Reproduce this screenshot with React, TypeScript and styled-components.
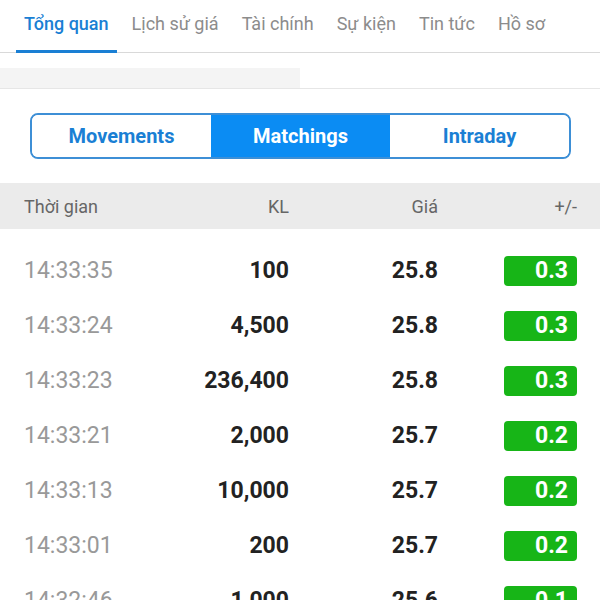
import React from 'react';
import styled, {createGlobalStyle} from 'styled-components';

const GlobalStyle = createGlobalStyle`
  body {
    margin: 0;
    background: #fff;
    font-family: Roboto, "Liberation Sans", sans-serif;
  }
`;

const Page = styled.div`
  width: 600px;
  height: 600px;
  overflow: hidden;
  background: #fff;
`;

const TabBar = styled.div`
  display: flex;
  gap: 7px;
  height: 53px;
  padding-left: 16px;
  border-bottom: 1px solid #d9d9d9;
  box-sizing: border-box;
`;

const Tab = styled.div<{active?: boolean}>`
  display: flex;
  align-items: center;
  padding: 0 8px 4px;
  margin-bottom: -1px;
  font-size: 18px;
  font-weight: ${p => (p.active ? 500 : 400)};
  color: ${p => (p.active ? '#1a7fd4' : '#8c8c8c')};
  border-bottom: 3px solid ${p => (p.active ? '#1a7fd4' : 'transparent')};
`;

const Strip = styled.div`
  padding-top: 15px;
  border-bottom: 1px solid #e6e6e6;
`;

const Placeholder = styled.div`
  width: 300px;
  height: 20px;
  background: #f4f4f4;
`;

const Segmented = styled.div`
  display: flex;
  margin: 24px 29px 0 30px;
  height: 46px;
  border: 2px solid #3d8fd6;
  border-radius: 8px;
  overflow: hidden;
  box-sizing: border-box;
`;

const Segment = styled.div<{active?: boolean}>`
  flex: 1;
  display: flex;
  align-items: center;
  justify-content: center;
  font-size: 20px;
  font-weight: 700;
  color: ${p => (p.active ? '#fff' : '#1a7fd4')};
  background: ${p => (p.active ? '#0b8cf3' : '#fff')};
`;

const Grid = styled.div`
  display: grid;
  grid-template-columns: 140px 125px 149px 1fr;
  align-items: center;
  padding: 0 23px 0 24px;
`;

const HeadRow = styled(Grid)`
  margin-top: 24px;
  height: 46px;
  background: #ebebeb;
  font-size: 18px;
  color: #666;
`;

const HeadCell = styled.div<{left?: boolean}>`
  text-align: ${p => (p.left ? 'left' : 'right')};
`;

const List = styled.div`
  padding-top: 14px;
`;

const Row = styled(Grid)`
  height: 55px;
  font-size: 23px;
`;

const Time = styled.div`
  color: #999;
`;

const Num = styled.div`
  text-align: right;
  font-weight: 700;
  color: #222;
`;

const Change = styled.div`
  justify-self: end;
  width: 73px;
  height: 30px;
  line-height: 30px;
  padding-right: 9px;
  box-sizing: border-box;
  border-radius: 4px;
  background: #17b517;
  color: #fff;
  font-weight: 700;
  text-align: right;
`;

const tabs = ['Tổng quan', 'Lịch sử giá', 'Tài chính', 'Sự kiện', 'Tin tức', 'Hồ sơ'];

const rows = [
  ['14:33:35', '100', '25.8', '0.3'],
  ['14:33:24', '4,500', '25.8', '0.3'],
  ['14:33:23', '236,400', '25.8', '0.3'],
  ['14:33:21', '2,000', '25.7', '0.2'],
  ['14:33:13', '10,000', '25.7', '0.2'],
  ['14:33:01', '200', '25.7', '0.2'],
  ['14:32:46', '1,000', '25.6', '0.1'],
];

export default function App() {
  return (
    <Page>
      <GlobalStyle/>
      <TabBar>
        {tabs.map((t, i) => <Tab key={t} active={i === 0}>{t}</Tab>)}
      </TabBar>
      <Strip>
        <Placeholder/>
      </Strip>
      <Segmented>
        <Segment>Movements</Segment>
        <Segment active>Matchings</Segment>
        <Segment>Intraday</Segment>
      </Segmented>
      <HeadRow>
        <HeadCell left>Thời gian</HeadCell>
        <HeadCell>KL</HeadCell>
        <HeadCell>Giá</HeadCell>
        <HeadCell>+/-</HeadCell>
      </HeadRow>
      <List>
        {rows.map(r =>
          <Row key={r[0]}>
            <Time>{r[0]}</Time>
            <Num>{r[1]}</Num>
            <Num>{r[2]}</Num>
            <Change>{r[3]}</Change>
          </Row>
        )}
      </List>
    </Page>
  );
}
